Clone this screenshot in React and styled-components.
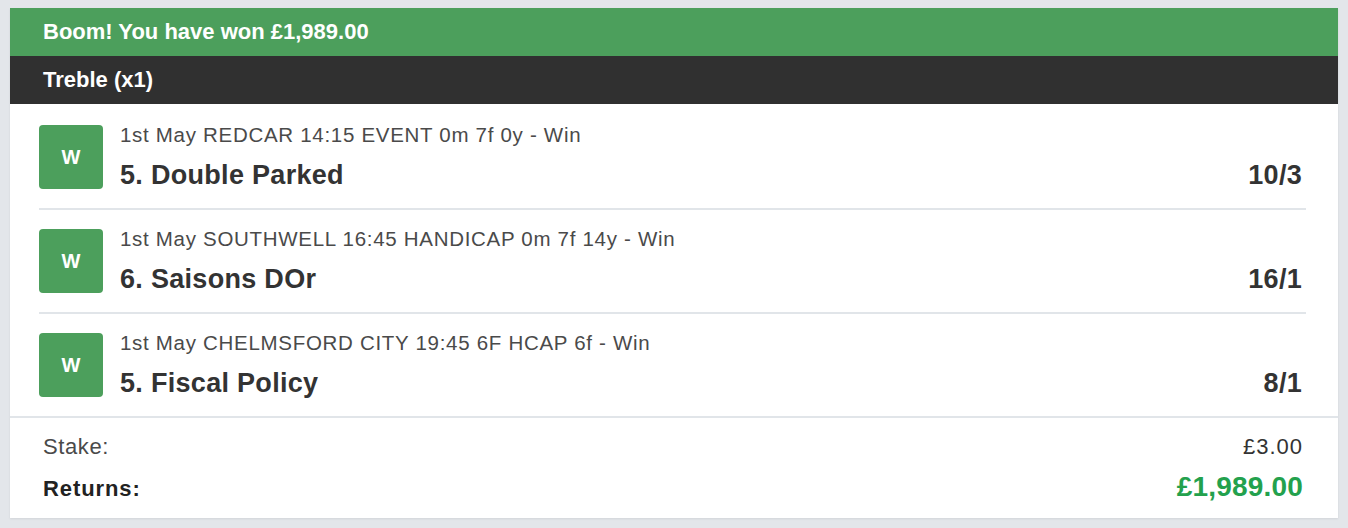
import React from "react";
import styled, { createGlobalStyle } from "styled-components";

const GlobalStyle = createGlobalStyle`
  html, body {
    margin: 0;
    padding: 0;
    background: #e3e6ea;
  }
  body {
    font-family: "Liberation Sans", Arial, Helvetica, sans-serif;
  }
`;

const Page = styled.div`
  padding: 8px 10px;
`;

const Card = styled.div`
  background: #fff;
  box-shadow: 0 1px 2px rgba(0, 0, 0, 0.08);
`;

const Banner = styled.div`
  display: flex;
  align-items: center;
  height: 48px;
  padding: 0 33px;
  background: ${(p) => (p.dark ? "#303030" : "#4c9f5c")};
  color: #fff;
  font-size: 22px;
  font-weight: bold;
`;

const Legs = styled.div`
  padding: 2px 32px 0 29px;
`;

const Leg = styled.div`
  display: flex;
  align-items: flex-start;
  padding: 19px 0;
  border-bottom: 2px solid #e1e5e9;

  &:last-child {
    border-bottom: none;
  }
`;

const Badge = styled.div`
  flex: 0 0 64px;
  height: 64px;
  display: flex;
  align-items: center;
  justify-content: center;
  background: #4c9f5c;
  border-radius: 4px;
  color: #fff;
  font-size: 20px;
  font-weight: bold;
`;

const LegBody = styled.div`
  flex: 1;
  height: 64px;
  padding: 0 4px 0 17px;
`;

const EventName = styled.div`
  font-size: 20.5px;
  line-height: 20px;
  letter-spacing: 0.7px;
  color: #4a4a4a;
`;

const Selection = styled.div`
  display: flex;
  justify-content: space-between;
  align-items: baseline;
  margin-top: 16px;
  font-size: 27px;
  line-height: 28px;
  font-weight: bold;
  letter-spacing: 0.3px;
  color: #333;
`;

const Footer = styled.div`
  border-top: 2px solid #e1e5e9;
  padding: 9px 35px 9px 33px;
`;

const TotalRow = styled.div`
  display: flex;
  justify-content: space-between;
  align-items: baseline;
  line-height: 40px;
  font-size: 22px;
  color: #444;
  font-weight: ${(p) => (p.strong ? "bold" : "normal")};
`;

const Label = styled.span`
  color: ${(p) => (p.strong ? "#222" : "#4a4a4a")};
  letter-spacing: ${(p) => (p.strong ? "0.9px" : "0.6px")};
`;

const Amount = styled.span`
  font-size: ${(p) => (p.win ? "28px" : "22px")};
  color: ${(p) => (p.win ? "#23a14d" : "#333")};
  letter-spacing: ${(p) => (p.win ? "0.2px" : "1px")};
`;

const legs = [
  {
    event: "1st May REDCAR 14:15 EVENT 0m 7f 0y - Win",
    runner: "5. Double Parked",
    odds: "10/3",
  },
  {
    event: "1st May SOUTHWELL 16:45 HANDICAP 0m 7f 14y - Win",
    runner: "6. Saisons DOr",
    odds: "16/1",
  },
  {
    event: "1st May CHELMSFORD CITY 19:45 6F HCAP 6f - Win",
    runner: "5. Fiscal Policy",
    odds: "8/1",
  },
];

export default function App() {
  return (
    <Page>
      <GlobalStyle />
      <Card>
        <Banner>Boom! You have won £1,989.00</Banner>
        <Banner dark>Treble (x1)</Banner>
        <Legs>
          {legs.map((leg) => (
            <Leg key={leg.runner}>
              <Badge>W</Badge>
              <LegBody>
                <EventName>{leg.event}</EventName>
                <Selection>
                  <span>{leg.runner}</span>
                  <span>{leg.odds}</span>
                </Selection>
              </LegBody>
            </Leg>
          ))}
        </Legs>
        <Footer>
          <TotalRow>
            <Label>Stake:</Label>
            <Amount>£3.00</Amount>
          </TotalRow>
          <TotalRow strong>
            <Label strong>Returns:</Label>
            <Amount win>£1,989.00</Amount>
          </TotalRow>
        </Footer>
      </Card>
    </Page>
  );
}
